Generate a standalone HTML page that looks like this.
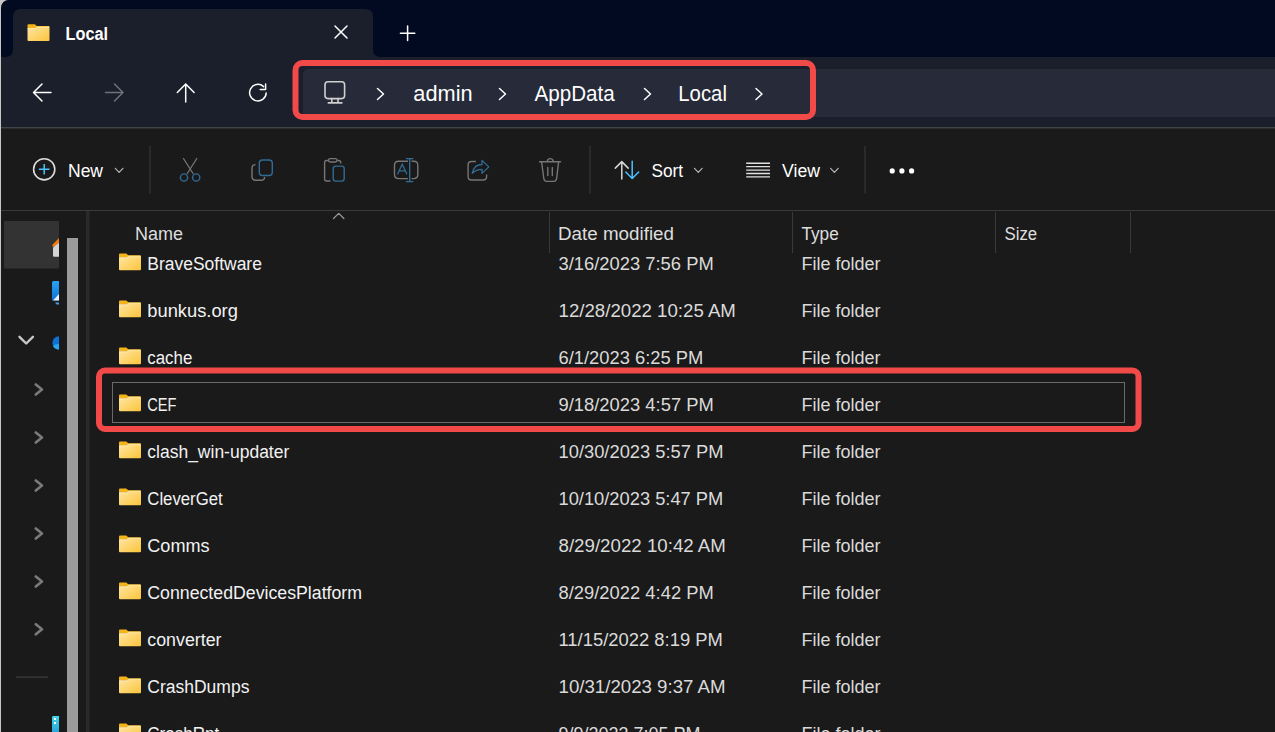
<!DOCTYPE html>
<html><head><meta charset="utf-8">
<style>
*{margin:0;padding:0;box-sizing:border-box}
html,body{width:1275px;height:732px;overflow:hidden;background:#c6c6c6}
body{position:relative;font-family:"Liberation Sans",sans-serif}
svg{position:absolute;left:0;top:0;display:block}
text{font-family:"Liberation Sans",sans-serif}
</style></head><body>
<svg width="1275" height="732" viewBox="0 0 1275 732">
<defs>
<linearGradient id="fg" x1="0" y1="0" x2="1" y2="1">
<stop offset="0" stop-color="#ffe6a6"/><stop offset="1" stop-color="#fcc53a"/>
</linearGradient>
<linearGradient id="cy" x1="0" y1="0" x2="0" y2="1"><stop offset="0" stop-color="#3fd6e8"/><stop offset="1" stop-color="#2aa6da"/></linearGradient>
<linearGradient id="gal" x1="0" y1="0" x2="0" y2="1"><stop offset="0" stop-color="#2aa4f4"/><stop offset="1" stop-color="#1070d4"/></linearGradient>
<symbol id="folder" viewBox="0 0 22 17" overflow="visible">
<path d="M0 1.2 Q0 0.2 1 0.2 H7 Q7.6 0.2 8 0.7 L9.2 2.1 V4.2 H0 Z" fill="#f3b41a"/>
<path d="M0 3.9 H8.2 L9.3 2.1 H21 Q22 2.1 22 3.1 V16 Q22 17 21 17 H1 Q0 17 0 16 Z" fill="url(#fg)"/>
<path d="M8.6 2.6 L9.5 2.6 H21.6" stroke="#fbc433" stroke-width="0.9" fill="none"/>
<path d="M0.4 4.6 H8.4 L9.4 3.4 H21.5" stroke="#fff1c2" stroke-width="0.8" fill="none" opacity="0.75"/>
</symbol>
</defs>
<!-- window bg -->
<path d="M1 9 Q1 0 10 0 H1275 V732 H1 Z" fill="#1a1a1a"/>
<path d="M1 9 Q1 0 10 0 H1275 V57 H1 Z" fill="#020a21"/>
<!-- tab -->
<path d="M13 17 Q13 9 21 9 H365 Q373 9 373 17 V57 H13 Z" fill="#1b1e2b"/>
<path d="M5 57 Q13 57 13 49 V57 Z" fill="#1b1e2b"/>
<path d="M381 57 Q373 57 373 49 V57 Z" fill="#1b1e2b"/>
<!-- nav row -->
<rect x="1" y="57" width="1274" height="70" fill="#1b1e2b"/>
<rect x="1" y="127" width="1274" height="1" fill="#434449"/><rect x="1" y="128" width="1274" height="1" fill="#2c2c2e"/>
<rect x="303" y="69" width="1000" height="48" rx="5" fill="#262a39"/>
<!-- title bar contents -->
<use href="#folder" x="27" y="24" width="23" height="17"/>
<text x="65.5" y="40.2" font-size="18" font-weight="bold" fill="#ffffff" textLength="42.5" lengthAdjust="spacingAndGlyphs">Local</text>
<g stroke="#ffffff" stroke-width="1.5" fill="none" stroke-linecap="round">
<path d="M335 26 L347 38 M347 26 L335 38"/>
<path d="M407.6 26 V40.4 M400.4 33.2 H414.8"/>
</g>
<!-- nav arrows -->
<g stroke="#ffffff" stroke-width="1.5" fill="none" stroke-linecap="round" stroke-linejoin="round">
<path d="M33.5 92.5 H51 M42 84 L33.5 92.5 L42 101"/>
<path d="M185.7 102 V84 M177.3 92.5 L185.7 84 L194.1 92.5"/>
<path d="M266.2 93 A8.3 8.3 0 1 1 263.6 86.6"/>
<path d="M265.6 84 V89.4 H260.2"/>
</g>
<g stroke="#6f727a" stroke-width="1.5" fill="none" stroke-linecap="round" stroke-linejoin="round">
<path d="M105.5 92.5 H123 M114.5 84 L123 92.5 L114.5 101"/>
</g>
<!-- breadcrumb -->
<g stroke="#d0d0d0" stroke-width="1.6" fill="none" stroke-linecap="round" stroke-linejoin="round">
<rect x="325" y="81.8" width="19.6" height="16.8" rx="3"/>
<path d="M331.8 98.6 V102.6 M338 98.6 V102.6 M328.3 102.9 H341.9"/>
</g>
<g stroke="#ffffff" stroke-width="1.5" fill="none" stroke-linecap="round" stroke-linejoin="round">
<path d="M377.5 88.5 L383.5 94 L377.5 99.5"/>
<path d="M499.5 88.5 L505.5 94 L499.5 99.5"/>
<path d="M644.5 88.5 L650.5 94 L644.5 99.5"/>
<path d="M756 88.5 L762 94 L756 99.5"/>
</g>
<g font-size="22" fill="#ffffff">
<text x="413.3" y="101.2" textLength="59.3" lengthAdjust="spacingAndGlyphs">admin</text>
<text x="534.5" y="101.2" textLength="80.2" lengthAdjust="spacingAndGlyphs">AppData</text>
<text x="678.3" y="101.2" textLength="48.6" lengthAdjust="spacingAndGlyphs">Local</text>
</g>
<!-- red box 1 -->
<rect x="295.5" y="63" width="517.5" height="54" rx="7" fill="none" stroke="#f24a48" stroke-width="6"/>
<!-- command bar -->
<rect x="1" y="210" width="1274" height="1" fill="#3a3a3a"/>
<circle cx="44.2" cy="169.3" r="10.6" fill="none" stroke="#dcdcdc" stroke-width="1.6"/>
<path d="M44.2 164 V174.6 M38.9 169.3 H49.5" stroke="#4cc2ff" stroke-width="1.5" fill="none"/>
<g font-size="17.5" fill="#ffffff">
<text x="68" y="177" textLength="35" lengthAdjust="spacingAndGlyphs">New</text>
<text x="651.5" y="177.2" textLength="31.6" lengthAdjust="spacingAndGlyphs">Sort</text>
<text x="782" y="177" textLength="38" lengthAdjust="spacingAndGlyphs">View</text>
</g>
<g stroke="#b5b5b5" stroke-width="1.2" fill="none" stroke-linecap="round" stroke-linejoin="round">
<path d="M115.3 168.3 L119.1 172.4 L122.9 168.3"/>
<path d="M694.5 168.3 L698.3 172.4 L702.1 168.3"/>
<path d="M830.6 168.3 L834.4 172.4 L838.2 168.3"/>
</g>
<g fill="#3b3b3b">
<rect x="149.5" y="146" width="1" height="47.5"/>
<rect x="589.5" y="146" width="1" height="47.5"/>
<rect x="864.5" y="146" width="1" height="47.5"/>
</g>
<!-- scissors -->
<g stroke="#767676" stroke-width="1.3" fill="none" stroke-linecap="round">
<path d="M183.5 158.5 L193 173.5 M196.8 158.5 L187.3 173.5"/>
</g>
<g stroke="#316c95" stroke-width="1.4" fill="none">
<circle cx="184" cy="177.5" r="3.6"/><circle cx="196.2" cy="177.5" r="3.6"/>
</g>
<!-- copy -->
<path d="M255.5 164.6 Q252 164.6 252 168.3 V176.6 Q252 180.3 255.7 180.3 H261 Q264.6 180.3 264.6 177" stroke="#767676" stroke-width="1.4" fill="none"/>
<rect x="259.3" y="160" width="13" height="15.5" rx="3.2" stroke="#316c95" stroke-width="1.4" fill="none"/>
<!-- paste -->
<path d="M330.5 181 H326.6 Q324.6 181 324.6 179 V162.5 Q324.6 160.5 326.6 160.5 H338.7 Q340.7 160.5 340.7 162.5 V163.6" stroke="#767676" stroke-width="1.4" fill="none"/>
<rect x="328.5" y="158.6" width="8.5" height="3.4" rx="1.7" stroke="#767676" stroke-width="1.3" fill="#1a1a1a"/>
<rect x="333.2" y="166.1" width="11" height="15" rx="2.6" stroke="#316c95" stroke-width="1.4" fill="none"/>
<!-- rename -->
<path d="M408 161.2 H398.5 Q394.5 161.2 394.5 165.2 V174.6 Q394.5 178.6 398.5 178.6 H408 M411.5 161.2 H413.8 Q417.8 161.2 417.8 165.2 V174.6 Q417.8 178.6 413.8 178.6 H411.5" stroke="#767676" stroke-width="1.4" fill="none"/>
<path d="M409.7 158.6 V181.6 M406 158.6 H413.4 M406 181.6 H413.4" stroke="#316c95" stroke-width="1.4" fill="none"/>
<path d="M397.5 174.3 L402.2 164.3 L406.9 174.3 M399.2 170.8 H405.2" stroke="#316c95" stroke-width="1.3" fill="none"/>
<!-- share -->
<path d="M476 161.5 H471.6 Q468.1 161.5 468.1 165 V176.5 Q468.1 180 471.6 180 H483.1 Q486.6 180 486.6 176.5 V174.6" stroke="#767676" stroke-width="1.4" fill="none"/>
<path d="M472.2 173.4 Q474 164.5 482 164.5 V160.4 L488.8 166.9 L482 173.4 V169.3 Q476 169.3 472.2 173.4 Z" stroke="#316c95" stroke-width="1.3" fill="none" stroke-linejoin="round"/>
<!-- delete -->
<g stroke="#767676" stroke-width="1.4" fill="none" stroke-linecap="round">
<path d="M539.5 161.7 H560.5"/>
<path d="M547.3 161.5 Q547.3 158.6 550.2 158.6 Q553.1 158.6 553.1 161.5"/>
<path d="M541.6 162 L543.8 178.5 Q544.2 181.4 547 181.4 H553.4 Q556.2 181.4 556.6 178.5 L558.6 162"/>
<path d="M547.8 167.5 V175.5 M552.3 167.5 V175.5"/>
</g>
<!-- sort icon -->
<path d="M621.8 179 V161.6 M615.3 168.1 L621.8 161.6 L628.2 168.1" stroke="#d6d6d6" stroke-width="1.5" fill="none" stroke-linecap="round" stroke-linejoin="round"/>
<path d="M632.2 161.3 V178.6 M625.8 172 L632.2 178.5 L638.7 172" stroke="#4cc2ff" stroke-width="1.5" fill="none" stroke-linecap="round" stroke-linejoin="round"/>
<!-- view icon -->
<g stroke="#e0e0e0" stroke-width="1.4">
<path d="M746.2 163.2 H770 M746.2 166.6 H770 M746.2 170.1 H770 M746.2 173.5 H770 M746.2 176.9 H770"/>
</g>
<g fill="#ffffff">
<circle cx="892.2" cy="170.9" r="2.6"/><circle cx="901.9" cy="170.9" r="2.6"/><circle cx="911.6" cy="170.9" r="2.6"/>
</g>
<!-- nav pane -->
<rect x="4" y="221" width="55" height="47.5" rx="1" fill="#333333"/>
<rect x="59" y="211" width="8" height="521" fill="#1a1a1a"/>
<rect x="67" y="238" width="11" height="494" fill="#9b9b9b"/>
<rect x="86" y="211" width="3.5" height="521" fill="#2a2a2a"/>
<!-- nav icons clipped -->
<path d="M52.2 245 L59 238 V242.3 L54.3 247.3 Q52.6 247.4 52.2 245 Z" fill="#f47a0c"/>
<path d="M53 247.8 L59 242.4 V256.8 H54.3 Q53 256.8 53 255.5 Z" fill="#d4d4d4"/>
<path d="M59 281 H53.6 Q52 281 52 282.6 V300.5 H59 Z" fill="url(#gal)"/>
<path d="M53 300.5 L59 294 V300.5 Z" fill="#e9f4ff"/>
<path d="M55 302.6 H59 V304.6 H56.5 Z" fill="#4a9be6"/>
<path d="M59 336.2 A6.6 6.6 0 0 0 59 349.4 Z" fill="#0f72d8"/>
<path d="M59 344 Q55 344.2 52.9 346 A6.6 6.6 0 0 0 59 349.4 Z" fill="#29a6f2"/>
<path d="M59 716 H53.4 Q52 716 52 717.4 V732 H59 Z" fill="url(#cy)"/>
<rect x="54" y="718" width="2" height="2" fill="#ffffff"/>
<rect x="54" y="722" width="2" height="2" fill="#ffffff"/>
<path d="M19.5 336.8 L26.2 343.5 L32.9 336.8" stroke="#c8c8c8" stroke-width="2.4" fill="none" stroke-linecap="round" stroke-linejoin="round"/>
<g stroke="#7a7a7a" stroke-width="2.7" fill="none" stroke-linecap="round" stroke-linejoin="round">
<path d="M35.8 384.5 L42 389.5 L35.8 394.5"/>
<path d="M35.8 432.5 L42 437.5 L35.8 442.5"/>
<path d="M35.8 480.5 L42 485.5 L35.8 490.5"/>
<path d="M35.8 528.5 L42 533.5 L35.8 538.5"/>
<path d="M35.8 576.5 L42 581.5 L35.8 586.5"/>
<path d="M35.8 624.3 L42 629.3 L35.8 634.3"/>
</g>
<rect x="16" y="676.5" width="32" height="1.2" fill="#3f3f3f"/>
<!-- column header -->
<g fill="#3a3a3a">
<rect x="549" y="212" width="1" height="41"/>
<rect x="792" y="212" width="1" height="41"/>
<rect x="995" y="212" width="1" height="41"/>
<rect x="1130" y="212" width="1" height="41"/>
</g>
<path d="M333.5 218.5 L338.7 213.3 L343.9 218.5" stroke="#9a9a9a" stroke-width="1.2" fill="none" stroke-linecap="round" stroke-linejoin="round"/>
<g font-size="17.5" fill="#dedede">
<text x="135" y="239.9" textLength="48" lengthAdjust="spacingAndGlyphs">Name</text>
<text x="558" y="239.9" textLength="116" lengthAdjust="spacingAndGlyphs">Date modified</text>
<text x="801.5" y="239.9" textLength="37.2" lengthAdjust="spacingAndGlyphs">Type</text>
<text x="1004.5" y="239.9" textLength="32.7" lengthAdjust="spacingAndGlyphs">Size</text>
</g>
<g font-size="18" fill="#f2f2f2">
<use href="#folder" x="119" y="253.3" width="22" height="17"/>
<text x="147.3" y="269.6" textLength="114.6" lengthAdjust="spacingAndGlyphs">BraveSoftware</text>
<text x="558.5" y="269.6" fill="#dadada" textLength="155.2" lengthAdjust="spacingAndGlyphs">3/16/2023 7:56 PM</text>
<text x="801.5" y="269.6" fill="#dadada">File folder</text>
<use href="#folder" x="119" y="300.3" width="22" height="17"/>
<text x="147.3" y="316.6" textLength="90.6" lengthAdjust="spacingAndGlyphs">bunkus.org</text>
<text x="558.5" y="316.6" fill="#dadada" textLength="177.4" lengthAdjust="spacingAndGlyphs">12/28/2022 10:25 AM</text>
<text x="801.5" y="316.6" fill="#dadada">File folder</text>
<use href="#folder" x="119" y="347.3" width="22" height="17"/>
<text x="147.3" y="363.6" textLength="45.0" lengthAdjust="spacingAndGlyphs">cache</text>
<text x="558.5" y="363.6" fill="#dadada" textLength="144.8" lengthAdjust="spacingAndGlyphs">6/1/2023 6:25 PM</text>
<text x="801.5" y="363.6" fill="#dadada">File folder</text>
<use href="#folder" x="119" y="394.3" width="22" height="17"/>
<text x="147.3" y="410.6" textLength="29.2" lengthAdjust="spacingAndGlyphs">CEF</text>
<text x="558.5" y="410.6" fill="#dadada" textLength="155.3" lengthAdjust="spacingAndGlyphs">9/18/2023 4:57 PM</text>
<text x="801.5" y="410.6" fill="#dadada">File folder</text>
<use href="#folder" x="119" y="441.3" width="22" height="17"/>
<text x="147.3" y="457.6" textLength="142.0" lengthAdjust="spacingAndGlyphs">clash_win-updater</text>
<text x="558.5" y="457.6" fill="#dadada" textLength="165.1" lengthAdjust="spacingAndGlyphs">10/30/2023 5:57 PM</text>
<text x="801.5" y="457.6" fill="#dadada">File folder</text>
<use href="#folder" x="119" y="488.3" width="22" height="17"/>
<text x="147.3" y="504.6" textLength="75.4" lengthAdjust="spacingAndGlyphs">CleverGet</text>
<text x="558.5" y="504.6" fill="#dadada" textLength="164.8" lengthAdjust="spacingAndGlyphs">10/10/2023 5:47 PM</text>
<text x="801.5" y="504.6" fill="#dadada">File folder</text>
<use href="#folder" x="119" y="535.3" width="22" height="17"/>
<text x="147.3" y="551.6" textLength="62.3" lengthAdjust="spacingAndGlyphs">Comms</text>
<text x="558.5" y="551.6" fill="#dadada" textLength="167.4" lengthAdjust="spacingAndGlyphs">8/29/2022 10:42 AM</text>
<text x="801.5" y="551.6" fill="#dadada">File folder</text>
<use href="#folder" x="119" y="582.3" width="22" height="17"/>
<text x="147.3" y="598.6" textLength="214.7" lengthAdjust="spacingAndGlyphs">ConnectedDevicesPlatform</text>
<text x="558.5" y="598.6" fill="#dadada" textLength="155.3" lengthAdjust="spacingAndGlyphs">8/29/2022 4:42 PM</text>
<text x="801.5" y="598.6" fill="#dadada">File folder</text>
<use href="#folder" x="119" y="629.3" width="22" height="17"/>
<text x="147.3" y="645.6" textLength="74.2" lengthAdjust="spacingAndGlyphs">converter</text>
<text x="558.5" y="645.6" fill="#dadada" textLength="164.4" lengthAdjust="spacingAndGlyphs">11/15/2022 8:19 PM</text>
<text x="801.5" y="645.6" fill="#dadada">File folder</text>
<use href="#folder" x="119" y="676.3" width="22" height="17"/>
<text x="147.3" y="692.6" textLength="102.1" lengthAdjust="spacingAndGlyphs">CrashDumps</text>
<text x="558.5" y="692.6" fill="#dadada" textLength="167.1" lengthAdjust="spacingAndGlyphs">10/31/2023 9:37 AM</text>
<text x="801.5" y="692.6" fill="#dadada">File folder</text>
<use href="#folder" x="119" y="723.3" width="22" height="17"/>
<text x="147.3" y="739.6" textLength="72.0" lengthAdjust="spacingAndGlyphs">CrashRpt</text>
<text x="558.5" y="739.6" fill="#dadada" textLength="142.0" lengthAdjust="spacingAndGlyphs">9/9/2023 7:05 PM</text>
<text x="801.5" y="739.6" fill="#dadada">File folder</text>
</g>
<rect x="112.5" y="382.5" width="1012" height="40" fill="none" stroke="#6a6a6a" stroke-width="1"/>
<rect x="99" y="370.5" width="1039.5" height="58.5" rx="6" fill="none" stroke="#f24a48" stroke-width="6"/>
<rect x="0" y="0" width="1" height="732" fill="#c6c6c6"/>
</svg>
</body></html>
